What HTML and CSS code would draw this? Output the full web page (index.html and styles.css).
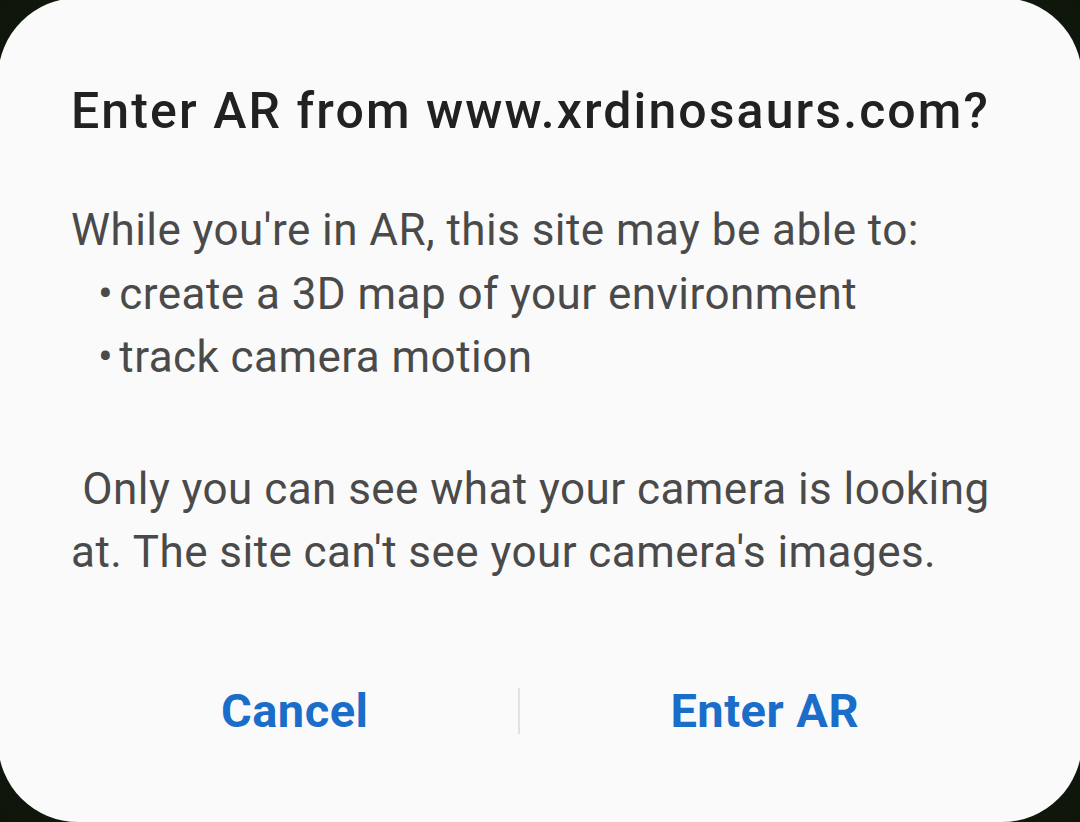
FILE: index.html
```html
<!DOCTYPE html>
<html>
<head>
    <meta charset="UTF-8">
    <title>Enter AR</title>
    <link rel="stylesheet" href="styles.css">
</head>
<body>
    <div class="dialog">
        <h1 class="title">Enter AR from www.xrdinosaurs.com?</h1>

        <div class="message">
            <p>While you're in AR, this site may be able to:</p>
            <ul class="perms">
                <li>create a 3D map of your environment</li>
                <li>track camera motion</li>
            </ul>
            <p class="note">&nbsp;Only you can see what your camera is looking at. The site can't see your camera's images.</p>
        </div>

        <div class="actions">
            <button class="action">Cancel</button>
            <span class="divider"></span>
            <button class="action">Enter AR</button>
        </div>
    </div>
</body>
</html>
```

FILE: styles.css
```css
html, body { margin: 0; height: 100%; }
body { background: radial-gradient(circle at 50% 50%, #25361f 0%, #15200f 70%, #0e150b 100%); overflow: hidden; font-family: Roboto, "Noto Sans", sans-serif; }
.dialog { box-sizing: border-box; margin: -2px -2px 0; height: 824px; padding: 85px 73px 0; background: #fafafa; border-radius: 80px; display: flex; flex-direction: column; }
.title { margin: 0; font-size: 50px; line-height: 56px; font-weight: 500; color: #212121; letter-spacing: 2.1px; white-space: nowrap; }
.message { margin-top: 60px; font-size: 44px; line-height: 63.5px; color: #4a4a4a; letter-spacing: 0.45px; }
.message p { margin: 0; }
.perms { list-style: none; margin: 0; padding: 0 0 0 27px; }
.perms li::before { content: "\2022"; margin-right: 6px; }
.note { margin-top: 68px !important; }
.actions { display: flex; align-items: center; margin-top: 98px; }
.action { flex: 1 1 auto; background: none; border: none; padding: 0; font-family: Roboto, "Noto Sans", sans-serif; font-size: 47px; font-weight: 700; color: #1a6dc8; line-height: 56px; letter-spacing: 0.5px; cursor: pointer; }
.divider { width: 2px; height: 46px; background: #e2e2e2; }
```
